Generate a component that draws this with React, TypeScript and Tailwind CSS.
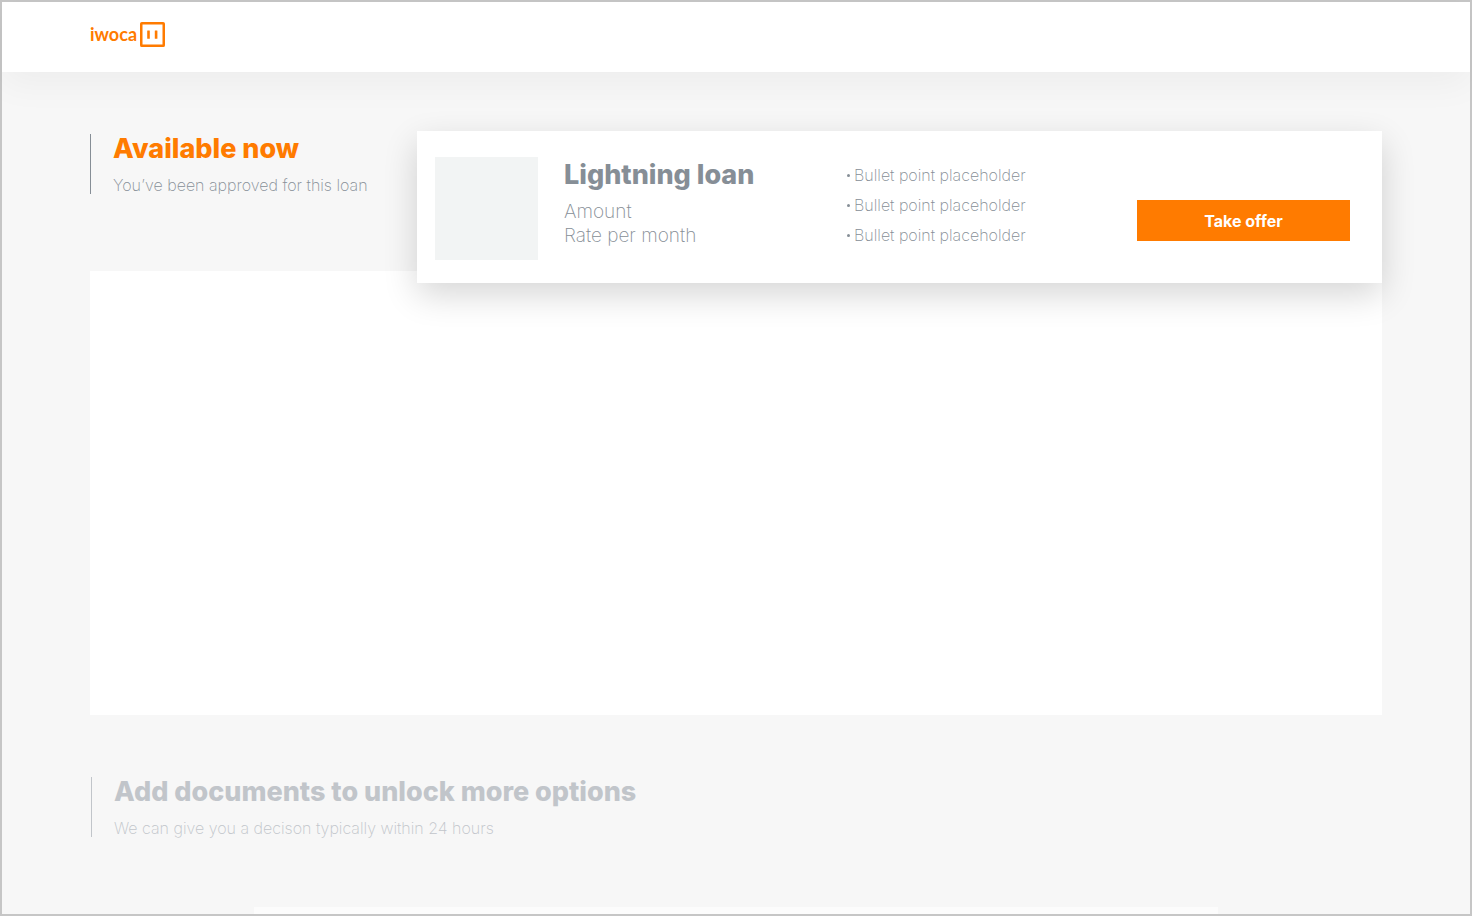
import React from "react";

const bullets = [
  "Bullet point placeholder",
  "Bullet point placeholder",
  "Bullet point placeholder",
];

function Logo() {
  return (
    <a href="#" aria-label="iwoca" className="flex items-center gap-[3px] text-[#ff7b00]">
      <span className="font-['Lato',sans-serif] text-[18px] leading-6 font-bold">iwoca</span>
      <svg width="25" height="25" viewBox="0 0 25 25" fill="none" aria-hidden="true">
        <rect x="1.25" y="1.25" width="22.5" height="22.5" rx="0.6" stroke="currentColor" strokeWidth="2.5" />
        <rect x="7.2" y="8.4" width="2.6" height="8.4" rx="0.4" fill="currentColor" />
        <rect x="14.8" y="8.4" width="2.6" height="8.4" rx="0.4" fill="currentColor" />
      </svg>
    </a>
  );
}

function LoanCard() {
  return (
    <article className="relative z-10 flex h-[152px] min-w-0 flex-1 bg-white pr-8 pl-[18px] shadow-[0_12px_32px_rgba(0,0,0,0.16)]">
      <div className="mt-[26px] size-[103px] shrink-0 bg-[#f2f4f4]" />
      <div className="ml-[26px] w-[283px] pt-7">
        <h2 className="text-[27px] leading-8 font-extrabold text-[#868e96]">Lightning loan</h2>
        <dl className="mt-[9px] text-[19px] leading-6 font-extralight text-[#868e96]">
          <dt>Amount</dt>
          <dt>Rate per month</dt>
        </dl>
      </div>
      <ul className="pt-[29px] text-[16px] leading-[30px] font-extralight text-[#868e96]">
        {bullets.map((text, i) => (
          <li key={i} className="flex items-center gap-1">
            <span className="size-[3px] rounded-full bg-[#868e96]" />
            {text}
          </li>
        ))}
      </ul>
      <button
        type="button"
        className="mt-[69px] ml-auto h-[41px] w-[213px] bg-[#ff7b00] text-[16px] font-bold text-white"
      >
        Take offer
      </button>
    </article>
  );
}

export default function App() {
  return (
    <div className="flex min-h-screen flex-col border-2 border-[#c6c6c6] bg-[#f7f7f7] font-['Inter',sans-serif]">
      <header className="flex h-[70px] items-center bg-white px-[88px] pb-1.5 shadow-[0_12px_36px_rgba(0,0,0,0.045)]">
        <Logo />
      </header>
      <main className="flex flex-1 flex-col px-[88px] pt-[59px]">
        <section>
          <div className="flex">
            <div className="mt-[3px] h-[60px] w-[327px] border-l border-[#868e96] pl-[22px]">
              <h1 className="text-[27px] leading-[30px] font-extrabold text-[#ff7b00]">Available now</h1>
              <p className="mt-[9px] text-[16px] leading-6 font-extralight text-[#868e96]">
                You’ve been approved for this loan
              </p>
            </div>
            <LoanCard />
          </div>
          <div className="-mt-3 h-[444px] bg-white" />
        </section>
        <section className="mt-[62px] ml-px h-[60px] border-l border-[#c1c5ca] pl-[22px]">
          <h2 className="text-[27px] leading-[30px] font-extrabold text-[#c1c5ca]">
            Add documents to unlock more options
          </h2>
          <p className="mt-[9px] text-[16px] leading-6 font-extralight text-[#c1c5ca]">
            We can give you a decison typically within 24 hours
          </p>
        </section>
        <div className="mx-[164px] mt-[70px] flex-1 bg-[#fcfcfc]" />
      </main>
    </div>
  );
}
